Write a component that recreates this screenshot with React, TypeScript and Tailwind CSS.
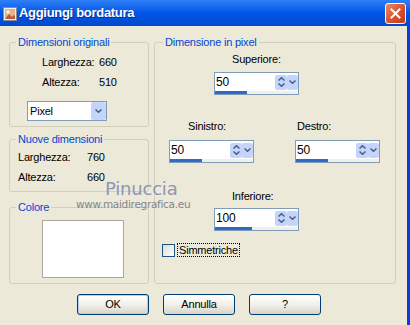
import React from 'react';

const Chevron = ({ dir = 'down' }: { dir?: 'up' | 'down' }) => (
  <svg width="7" height="4" viewBox="0 0 7 4" className="block">
    {dir === 'down' ? (
      <path d="M0.5 0.5 L3.5 3.3 L6.5 0.5" fill="none" stroke="#4D6185" strokeWidth="1.5" />
    ) : (
      <path d="M0.5 3.5 L3.5 0.7 L6.5 3.5" fill="none" stroke="#4D6185" strokeWidth="1.5" />
    )}
  </svg>
);

function Spin({ value, bar }: { value: string; bar: string }) {
  return (
    <div className="w-[85px] h-[23px] border border-[#7F9DB9] bg-white flex flex-col">
      <div className="h-[18px] flex items-center">
        <span className="flex-1 pl-[1px] text-[12px] leading-none text-black">{value}</span>
        <div className="w-[12px] h-[15px] rounded-[2px] bg-[#C4D4FB] flex flex-col items-center justify-center gap-[2px]">
          <Chevron dir="up" />
          <Chevron dir="down" />
        </div>
        <div className="w-[11px] h-[15px] rounded-[2px] bg-[#C4D4FB] flex items-center justify-center">
          <Chevron />
        </div>
      </div>
      <div className="h-[3px] bg-[#F1EFE6]">
        <div className={`h-full bg-[#316AC5] ${bar}`} />
      </div>
    </div>
  );
}

function Group({ title, className = '', legendClass = 'ml-[6px]', children }: { title: string; className?: string; legendClass?: string; children: React.ReactNode }) {
  return (
    <fieldset className={`border border-[#D0D0BF] rounded-[3px] ${className}`}>
      <legend className={`${legendClass} px-[2px] leading-[13px] text-[#0046D5]`}>{title}</legend>
      {children}
    </fieldset>
  );
}

function XpButton({ label, primary = false }: { label: string; primary?: boolean }) {
  return (
    <button
      className={`w-[72px] h-[21px] rounded-[3px] border border-[#003C74] bg-gradient-to-b from-[#FFFFFF] via-[#F1F0EA] to-[#D9D4C8] text-black text-[11px] leading-none ${
        primary ? 'shadow-[inset_0_0_0_1px_#B6CDF2]' : ''
      }`}
    >
      {label}
    </button>
  );
}

export default function App() {
  return (
    <div className="relative w-[410px] h-[325px] overflow-hidden bg-[#ECE9D8] font-['Liberation_Sans',Arial,sans-serif] text-[11px] tracking-[-0.2px] text-black">
      {/* title bar */}
      <div className="h-[26px] flex items-center bg-gradient-to-b from-[#2E7FF7] via-[#0055E5] to-[#0049D0]">
        <svg width="16" height="16" viewBox="0 0 16 16" className="ml-[2px] mt-[1px]">
          <rect x="1.5" y="1.5" width="13" height="13" fill="#F4EEE8" stroke="#8C8C8C" />
          <rect x="3" y="3" width="10" height="10" fill="#E8B08C" />
          <circle cx="6" cy="6" r="1.8" fill="#FFF2D0" />
          <path d="M3 13 L7 8 L10 11 L12 9 L13 10 L13 13 Z" fill="#B85A3A" />
        </svg>
        <span className="ml-[1px] text-white font-bold text-[13px] tracking-[-0.3px] [text-shadow:1px_1px_0_#0A2C94]">
          Aggiungi bordatura
        </span>
        <div className="ml-auto mr-[4px] w-[21px] h-[21px] rounded-[3px] border border-white bg-gradient-to-br from-[#E98A6C] via-[#D9542F] to-[#C03A16] flex items-center justify-center">
          <svg width="11" height="11" viewBox="0 0 11 11">
            <path d="M1.5 1.5 L9.5 9.5 M9.5 1.5 L1.5 9.5" stroke="white" strokeWidth="2" strokeLinecap="square" />
          </svg>
        </div>
      </div>

      {/* body */}
      <div className="h-[299px] border-r-[3px] border-[#0B3CDB] pl-[9px] pt-[10px]">
        <div className="flex">
          <div className="w-[140px] flex flex-col">
            <Group title="Dimensioni originali" className="pb-[5px]">
              <div className="mt-[3px] ml-[32px] grid grid-cols-[57px_auto] leading-[20px]">
                <span>Larghezza:</span>
                <span>660</span>
                <span>Altezza:</span>
                <span>510</span>
              </div>
              <div className="mt-[9px] ml-[17px] w-[80px] h-[20px] border border-[#7F9DB9] bg-white flex items-center">
                <span className="flex-1 pl-[2px]">Pixel</span>
                <div className="w-[15px] h-[18px] mr-[0px] rounded-[2px] bg-[#C4D4FB] flex items-center justify-center">
                  <Chevron />
                </div>
              </div>
            </Group>
            <Group title="Nuove dimensioni" className="mt-[6px] pb-[4px]">
              <div className="mt-[1px] ml-[8px] grid grid-cols-[69px_auto] leading-[20px]">
                <span>Larghezza:</span>
                <span>760</span>
                <span>Altezza:</span>
                <span>660</span>
              </div>
            </Group>
            <Group title="Colore" className="mt-[9px] pb-[5px]">
              <div className="mt-[6px] ml-[32px] w-[82px] h-[58px] bg-white border border-[#ACA899]" />
            </Group>
          </div>

          <Group title="Dimensione in pixel" className="ml-[5px] w-[242px]" legendClass="ml-[8px]">
            <div className="mt-[4px] ml-[77px] leading-[13px]">Superiore:</div>
            <div className="mt-[6px] ml-[59px]">
              <Spin value="50" bar="w-[32px]" />
            </div>
            <div className="flex mt-[25px]">
              <div className="ml-[14px] flex flex-col">
                <span className="pl-[19px] leading-[13px]">Sinistro:</span>
                <div className="mt-[7px]">
                  <Spin value="50" bar="w-[32px]" />
                </div>
              </div>
              <div className="ml-[41px] flex flex-col">
                <span className="pl-[2px] leading-[13px]">Destro:</span>
                <div className="mt-[7px]">
                  <Spin value="50" bar="w-[32px]" />
                </div>
              </div>
            </div>
            <div className="mt-[27px] ml-[77px] leading-[13px]">Inferiore:</div>
            <div className="mt-[5px] ml-[59px]">
              <Spin value="100" bar="w-[37px]" />
            </div>
            <div className="mt-[12px] ml-[7px] flex items-center h-[14px]">
              <div className="w-[13px] h-[13px] border border-[#1C5180] bg-gradient-to-br from-[#DCDCD7] to-white" />
              <span className="ml-[2px] h-[14px] px-[1px] leading-[12px] border border-dotted border-black">Simmetriche</span>
            </div>
          </Group>
        </div>

        <div className="mt-[10px] pl-[68px] flex gap-[14px]">
          <XpButton label="OK" primary />
          <XpButton label="Annulla" />
          <XpButton label="?" />
        </div>
      </div>

      {/* watermark */}
      <div className="absolute left-[105px] top-[179px] font-['DejaVu_Sans',sans-serif] text-[18px] leading-[20px] tracking-[-0.2px] text-[#8D96B8]">
        Pinuccia
      </div>
      <div className="absolute left-[76px] top-[198px] font-['DejaVu_Sans',sans-serif] text-[10.5px] leading-[12px] tracking-[-0.3px] text-[#85858F]">
        www.maidiregrafica.eu
      </div>
    </div>
  );
}
